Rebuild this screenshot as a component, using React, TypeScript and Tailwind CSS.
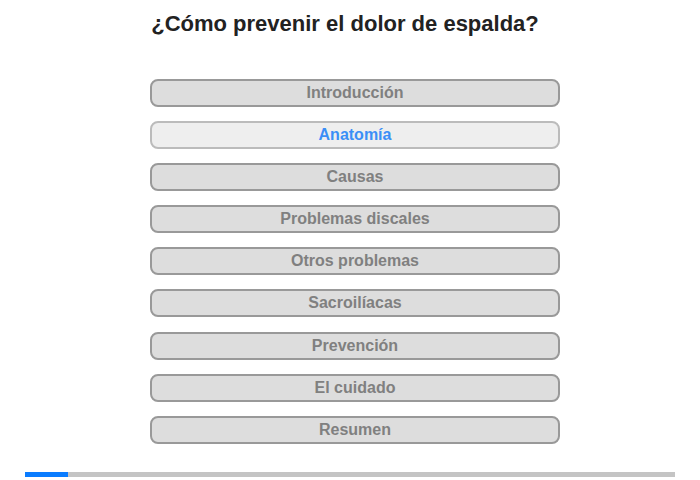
import React from "react";

const items = [
  "Introducción",
  "Anatomía",
  "Causas",
  "Problemas discales",
  "Otros problemas",
  "Sacroilíacas",
  "Prevención",
  "El cuidado",
  "Resumen",
];

export default function App() {
  return (
    <div
      className="w-[700px] h-[480px] bg-white flex flex-col"
      style={{ fontFamily: '"Liberation Sans", Arial, sans-serif' }}
    >
      <h1 className="mt-[10px] h-[28px] pr-[10px] text-center text-[22px] leading-[28px] font-bold text-[#222222]">
        ¿Cómo prevenir el dolor de espalda?
      </h1>
      <div className="mt-[41px] ml-[150px] w-[410px] flex flex-col gap-[14.1px]">
        {items.map((t, i) => {
          const active = i === 1;
          return (
            <div
              key={t}
              className={
                active
                  ? "h-[28px] rounded-[8px] border-2 border-[#bbbbbb] bg-[#eeeeee] flex items-center justify-center text-[16px] font-bold text-[#3b8ff7]"
                  : "h-[28px] rounded-[8px] border-2 border-[#999999] bg-[#dddddd] flex items-center justify-center text-[16px] font-bold text-[#808080]"
              }
            >
              {t}
            </div>
          );
        })}
      </div>
      <div className="mt-[28px] ml-[25px] w-[650px] h-[5px] bg-[#c4c4c4] flex">
        <div className="w-[43px] h-full bg-[#0a7cff]" />
      </div>
    </div>
  );
}
